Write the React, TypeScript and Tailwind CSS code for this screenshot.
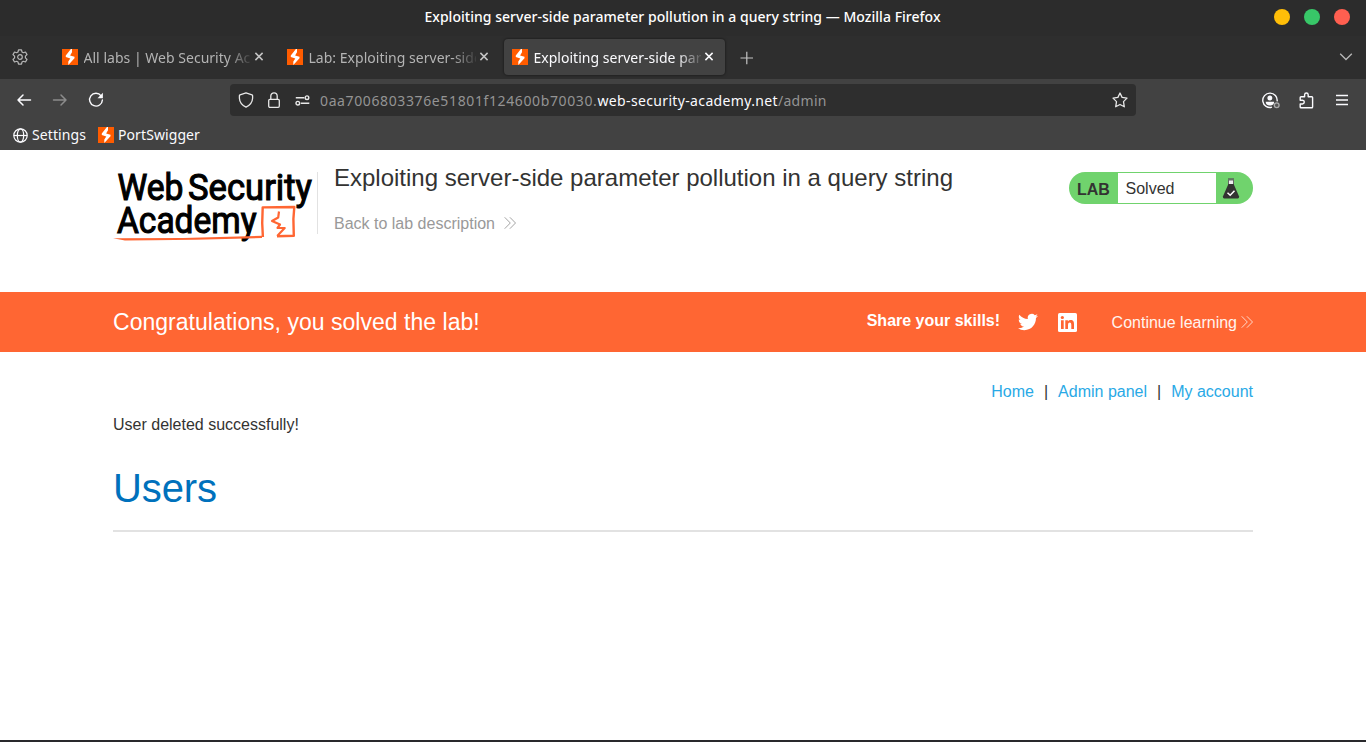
import React from "react";

const chrome = "font-['Noto_Sans',sans-serif]";

function Bolt() {
  return (
    <svg width="16" height="16" viewBox="0 0 16 16" className="block shrink-0">
      <rect width="16" height="16" fill="#ff5c00" />
      <path d="M8.9 0 L3.8 6.6 V8 L8.3 9.4 L6.3 12.6 V16 L12.5 9.2 V7.8 L8.1 6.4 L10 3.2 V0Z" fill="#fff" />
    </svg>
  );
}

function Close({ color }: { color: string }) {
  return (
    <svg width="10" height="10" viewBox="0 0 10 10" className="block shrink-0">
      <path d="M1.4 0.9 L8.6 8.1 M8.6 0.9 L1.4 8.1" stroke={color} strokeWidth="1.5" fill="none" />
    </svg>
  );
}

function Tab({ title, active }: { title: string; active?: boolean }) {
  return (
    <div
      className={
        active
          ? "flex h-9 w-[221px] items-center rounded-[4px] bg-[#424242] pl-2 pr-[11px] text-[#fbfbfe] shadow-[0_0_3px_rgba(0,0,0,0.6)]"
          : "flex h-9 w-[221px] items-center rounded-[4px] pl-2 pr-[11px] text-[#b4b4b4]"
      }
    >
      <Bolt />
      <div className="ml-[5.5px] mt-[2px] h-5 w-[167.5px] overflow-hidden whitespace-nowrap text-[14px] leading-5 tracking-[0.02px] [mask-image:linear-gradient(to_right,black_143px,transparent_170px)]">
        {title}
      </div>
      <div className="ml-[3px]">
        <Close color={active ? "#fbfbfe" : "#c4c4c4"} />
      </div>
    </div>
  );
}

function Chevrons({ color }: { color: string }) {
  return (
    <svg width="12" height="12" viewBox="0 0 12 12" className="block" fill="none" stroke={color} strokeWidth="0.9">
      <path d="M0.7 0.3 L6.3 6 L0.7 11.7 M5.9 0.3 L11.5 6 L5.9 11.7" />
    </svg>
  );
}

function Logo() {
  return (
    <svg width="204" height="74" viewBox="0 0 204 74" className="block">
      <g fill="#000" stroke="#000" strokeWidth="1.1" fontFamily="Roboto, sans-serif" fontWeight="400">
        <text x="4.5" y="29.3" fontSize="36.5" textLength="66" lengthAdjust="spacingAndGlyphs">Web</text>
        <text x="75" y="29.3" fontSize="36.5" textLength="124" lengthAdjust="spacingAndGlyphs">Security</text>
        <text x="4" y="62" fontSize="36.5" textLength="139.5" lengthAdjust="spacingAndGlyphs">Academy</text>
      </g>
      <g fill="none" stroke="#ff6633" strokeLinejoin="round">
        <path d="M149.9 66 L149.2 52 L149.7 36.4 L181.3 36 L180.4 48 L180.8 64.8 L164 65.3" strokeWidth="2.4" />
        <path d="M166 40.5 L165.2 46.5 L159 50 L167 53.5 L164.5 56.8 L171.7 57 L164.2 65" strokeWidth="2.2" />
      </g>
      <path d="M0 67.3 L70 67 L149 64.8 V67 L82 68.7 L40 69.2 L12 69.6Z" fill="#ff6633" />
    </svg>
  );
}

export default function App() {
  return (
    <div className="flex h-[742px] w-[1366px] flex-col overflow-hidden bg-white">
      <div className={`${chrome} shrink-0`}>
        <div className="grid h-9 grid-cols-[1fr_auto_1fr] items-center bg-[#2c2c2c] pr-4">
          <span />
          <span className="whitespace-nowrap pb-[2px] pl-[15px] text-[14px] font-medium leading-5 tracking-[0.03px] text-white">
            Exploiting server-side parameter pollution in a query string — Mozilla Firefox
          </span>
          <div className="flex justify-end gap-[14px] pb-[2px]">
            <i className="block size-4 rounded-full bg-[#ffbe08]" />
            <i className="block size-4 rounded-full bg-[#38c768]" />
            <i className="block size-4 rounded-full bg-[#ff5f50]" />
          </div>
        </div>

        <div className="flex h-[43px] items-center bg-[#2e2e2e] pl-3 pr-[13px]">
          <svg width="16" height="16" viewBox="0 0 16 16" className="mb-[2px] mr-[26px] block" fill="none" stroke="#b8b8b8" strokeWidth="1.2" strokeLinejoin="round">
            <path d="M6.5 0.8 H9.5 L10 3 L11.3 3.7 L13.5 3 L15 5.6 L13.4 7.2 V8.8 L15 10.4 L13.5 13 L11.3 12.3 L10 13 L9.5 15.2 H6.5 L6 13 L4.7 12.3 L2.5 13 L1 10.4 L2.6 8.8 V7.2 L1 5.6 L2.5 3 L4.7 3.7 L6 3Z" />
            <circle cx="8" cy="8" r="2.3" />
          </svg>
          <div className="mb-px flex gap-1">
            <Tab title="All labs | Web Security Academy" />
            <Tab title="Lab: Exploiting server-side parameter" />
            <Tab title="Exploiting server-side parameter" active />
          </div>
          <svg width="14" height="14" viewBox="0 0 14 14" className="ml-[15px] block" stroke="#c4c4c4" strokeWidth="1.2">
            <path d="M0.5 7 H13 M6.8 0.7 V13.3" />
          </svg>
          <svg width="14" height="8" viewBox="0 0 14 8" className="mb-[2px] ml-auto block" fill="none" stroke="#b8b8b8" strokeWidth="1.3">
            <path d="M1.2 0.8 L7 6.5 L12.8 0.8" />
          </svg>
        </div>

        <div className="flex h-[42px] items-center bg-[#424242] pl-4 pr-[18px]">
          <svg width="16" height="14" viewBox="0 0 16 14" className="block" fill="none" stroke="#fbfbfe" strokeWidth="1.5">
            <path d="M14.5 7 H2 M7 2 L2 7 L7 12" strokeLinecap="round" strokeLinejoin="round" />
          </svg>
          <svg width="16" height="14" viewBox="0 0 16 14" className="ml-5 block" fill="none" stroke="#8c8c8c" strokeWidth="1.5">
            <path d="M1.5 7 H14 M9 2 L14 7 L9 12" strokeLinecap="round" strokeLinejoin="round" />
          </svg>
          <svg width="16" height="16" viewBox="0 0 16 16" className="ml-5 block" fill="none" stroke="#fbfbfe" strokeWidth="1.4">
            <path d="M13.1 3.8 A6.4 6.4 0 1 0 14.4 8" strokeLinecap="round" />
            <path d="M14.9 0.8 V6.2 H9.5Z" fill="#fbfbfe" stroke="none" />
          </svg>
          <div className="ml-[126px] flex h-8 w-[906px] items-center rounded-[4px] bg-[#2e2e2e] pl-2 pr-2">
            <svg width="16" height="16" viewBox="0 0 16 16" className="block" fill="none" stroke="#e8e8e8" strokeWidth="1.3" strokeLinejoin="round">
              <path d="M8 0.8 L14 2.8 Q14.6 3 14.6 3.7 V6.2 Q14.3 12 8 15.2 Q1.7 12 1.4 6.2 V3.7 Q1.4 3 2 2.8Z" />
            </svg>
            <svg width="12" height="16" viewBox="0 0 12 16" className="ml-[14px] block" fill="none" stroke="#e8e8e8" strokeWidth="1.3">
              <rect x="0.7" y="7.4" width="10.6" height="7.9" rx="1.2" />
              <path d="M2.8 7.4 V4 A3.2 3.2 0 0 1 9.2 4 V7.4" />
            </svg>
            <svg width="15" height="11" viewBox="0 0 15 11" className="ml-[15px] block" fill="none" stroke="#e8e8e8" strokeWidth="1.4">
              <path d="M0.8 2.7 H9.3 M5.8 8.2 H14.3" />
              <circle cx="12" cy="2.7" r="1.8" />
              <circle cx="2.8" cy="8.2" r="1.8" />
            </svg>
            <div className="ml-[10px] whitespace-nowrap pt-[2px] text-[14px] leading-5 tracking-[0.62px] text-[#949494]">
              0aa7006803376e51801f124600b70030.<span className="tracking-[0.35px] text-[#fbfbfe]">web-security-academy.net</span><span className="tracking-[0.3px]">/admin</span>
            </div>
            <svg width="16" height="16" viewBox="0 0 16 16" className="ml-auto block" fill="none" stroke="#e8e8e8" strokeWidth="1.3" strokeLinejoin="round">
              <path d="M8 1 L10.1 5.4 L15 6.1 L11.5 9.6 L12.3 14.8 L8 12.5 L3.7 14.8 L4.5 9.6 L1 6.1 L5.9 5.4Z" />
            </svg>
          </div>
          <svg width="19" height="17" viewBox="0 0 19 17" className="ml-auto block" fill="none">
            <path d="M11 15.2 A7.2 7.2 0 1 1 16.1 9.3" stroke="#fbfbfe" strokeWidth="1.4" />
            <circle cx="8.9" cy="6" r="2.5" fill="#fbfbfe" />
            <path d="M4.7 9.7 H13.1 Q13.1 13.5 8.9 13.5 Q4.7 13.5 4.7 9.7Z" fill="#fbfbfe" />
            <circle cx="15.7" cy="13.2" r="2.4" stroke="#aaa" strokeWidth="1.3" fill="#555" />
          </svg>
          <svg width="15" height="17" viewBox="0 0 15 17" className="ml-[19px] block" fill="none" stroke="#fbfbfe" strokeWidth="1.4" strokeLinejoin="round">
            <path d="M1.2 8.3 V5.5 Q1.2 4.7 2 4.7 H5.6 V2.7 Q5.7 1 7.4 1 Q9.1 1 9.2 2.7 V4.7 H12.8 Q13.6 4.7 13.6 5.5 V15 Q13.6 15.8 12.8 15.8 H2 Q1.2 15.8 1.2 15 V12 H3.5 Q5.3 11.8 5.3 10.1 Q5.3 8.5 3.5 8.3Z" />
          </svg>
          <svg width="12" height="12" viewBox="0 0 12 12" className="ml-[22px] block" stroke="#fbfbfe" strokeWidth="1.4">
            <path d="M0 1.5 H12 M0 6 H12 M0 10.5 H12" />
          </svg>
        </div>

        <div className="flex h-[29px] items-center bg-[#424242] pl-[13px] text-[14px] leading-5 tracking-[0.09px] text-[#fbfbfe]">
          <svg width="15" height="15" viewBox="0 0 15 15" className="block" fill="none" stroke="#fbfbfe" strokeWidth="1.2">
            <circle cx="7.5" cy="7.5" r="6.7" />
            <ellipse cx="7.5" cy="7.5" rx="3.2" ry="6.7" />
            <path d="M0.8 7.5 H14.2" />
          </svg>
          <span className="ml-1 w-[54px] whitespace-nowrap pb-[2px]">Settings</span>
          <div className="mb-[2px] ml-3"><Bolt /></div>
          <span className="ml-1 pb-[2px]">PortSwigger</span>
        </div>
      </div>

      <main className="grow bg-white font-['Liberation_Sans',Arial,sans-serif] text-base text-[#333332]">
        <div className="mx-[113px] flex h-[142px] items-start">
          <div className="mt-[21px]"><Logo /></div>
          <div className="mt-[22px] h-[62px] w-px bg-[#e2e2e2]" />
          <div className="ml-4 mt-[14px]">
            <h2 className="whitespace-nowrap text-[24px] leading-7">Exploiting server-side parameter pollution in a query string</h2>
            <a className="mt-[22px] flex items-center gap-[9px] leading-5 text-[#999]">
              Back to lab description <span className="pb-[2px]"><Chevrons color="#999" /></span>
            </a>
          </div>
          <div className="ml-auto mt-[22px] flex h-8 w-[184px] items-center overflow-hidden rounded-full bg-[#70d36d]">
            <b className="w-[49px] pl-2 pt-[3px] leading-5">LAB</b>
            <span className="flex h-[30px] w-[98px] items-center bg-white pl-[7.5px] pt-px">Solved</span>
            <svg width="18" height="21" viewBox="0 0 18 21" className="ml-[6px] block">
              <path d="M6 1 H12" stroke="#59695b" strokeWidth="1.5" />
              <path d="M6.5 2 H11.5 V7 H6.5Z" fill="#eee" stroke="#666" strokeWidth="1" />
              <path d="M6.4 6 H11.6 L17 18.2 Q17.4 20.5 15.7 20.5 H2.3 Q0.6 20.5 1 18.2Z" fill="#333332" />
              <path d="M5.5 14.7 L8.2 17.2 L12.5 12.8" fill="none" stroke="#fff" strokeWidth="1.5" />
            </svg>
          </div>
        </div>

        <div className="flex h-[60px] items-center bg-[#ff6633] px-[113px] text-white">
          <h4 className="text-[23px] leading-7 tracking-[0.03px]">Congratulations, you solved the lab!</h4>
          <b className="ml-auto mb-[2px] whitespace-nowrap leading-5">Share your skills!</b>
          <svg width="20" height="20" viewBox="0 0 24 24" className="ml-[18px] block" fill="#fff">
            <path d="M23.953 4.57a10 10 0 01-2.825.775 4.958 4.958 0 002.163-2.723c-.951.555-2.005.959-3.127 1.184a4.92 4.92 0 00-8.384 4.482C7.69 8.095 4.067 6.13 1.64 3.162a4.822 4.822 0 00-.666 2.475c0 1.71.87 3.213 2.188 4.096a4.904 4.904 0 01-2.228-.616v.06a4.923 4.923 0 003.946 4.827 4.996 4.996 0 01-2.212.085 4.936 4.936 0 004.604 3.417 9.867 9.867 0 01-6.102 2.105c-.39 0-.779-.023-1.17-.067a13.995 13.995 0 007.557 2.209c9.053 0 13.998-7.496 13.998-13.985 0-.21 0-.42-.015-.63A9.935 9.935 0 0024 4.59z" />
          </svg>
          <svg width="19" height="19" viewBox="0 0 19 19" className="ml-[19.5px] block">
            <rect width="19" height="19" rx="1.6" fill="#fff" />
            <path d="M3 7.3 H5.7 V16 H3Z M7.3 7.3 H9.9 V8.5 Q10.7 7.1 12.6 7.1 C15.4 7.1 16 8.9 16 11.3 V16 H13.3 V11.8 Q13.3 9.5 11.8 9.5 Q10 9.5 10 11.8 V16 H7.3Z" fill="#ff6633" />
            <circle cx="4.35" cy="4.5" r="1.6" fill="#ff6633" />
          </svg>
          <a className="ml-[35px] flex items-center gap-1 whitespace-nowrap pt-[2px] leading-5 text-[#fff4ef]">
            Continue learning <span className="pb-[2px]"><Chevrons color="#ffe4da" /></span>
          </a>
        </div>

        <section className="mx-[113px]">
          <nav className="flex justify-end gap-[10px] pt-[30px] leading-5">
            <a className="text-[#29a9e6]">Home</a>
            <span>|</span>
            <a className="text-[#29a9e6]">Admin panel</a>
            <span>|</span>
            <a className="text-[#29a9e6]">My account</a>
          </nav>
          <p className="mt-[13px] leading-5">User deleted successfully!</p>
          <h1 className="mt-[29px] text-[40px] leading-[48px] tracking-[-0.1px] text-[#0071bc]">Users</h1>
          <hr className="mt-[18px] border-0 border-t-2 border-[#e2e2e2]" />
        </section>
      </main>
      <div className="h-[2px] shrink-0 bg-[#29292c]" />
    </div>
  );
}
